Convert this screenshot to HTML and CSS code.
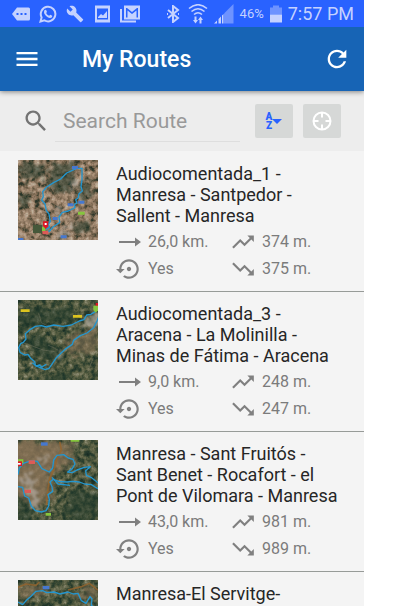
FILE: index.html
```html
<!DOCTYPE html>
<html lang="en">
<head>
<meta charset="utf-8">
<meta name="viewport" content="width=device-width, initial-scale=1">
<title>My Routes</title>
<link rel="stylesheet" href="styles.css">
</head>
<body>
<svg class="defs" aria-hidden="true">
  <defs>
    <!-- Terrain: noise mapped through a colour ramp -->
    <filter id="dry" x="0" y="0" width="1" height="1" color-interpolation-filters="sRGB">
      <feTurbulence type="fractalNoise" baseFrequency="0.06" numOctaves="5" seed="4"/>
      <feColorMatrix values="1.500 0 0 0 -.2  1.500 0 0 0 -.2  1.500 0 0 0 -.2  0 0 0 0 1"/>
      <feComponentTransfer>
        <feFuncR type="table" tableValues=".15 .18 .3 .44 .54 .6 .68 .7 .75"/>
        <feFuncG type="table" tableValues=".18 .22 .29 .38 .45 .51 .58 .62 .7"/>
        <feFuncB type="table" tableValues=".14 .17 .22 .29 .36 .42 .48 .55 .6"/>
      </feComponentTransfer>
    </filter>
    <filter id="green" x="0" y="0" width="1" height="1" color-interpolation-filters="sRGB">
      <feTurbulence type="fractalNoise" baseFrequency="0.06" numOctaves="5" seed="9"/>
      <feColorMatrix values="1.400 0 0 0 -.18  1.400 0 0 0 -.18  1.400 0 0 0 -.18  0 0 0 0 1"/>
      <feComponentTransfer>
        <feFuncR type="table" tableValues=".1 .12 .16 .22 .29 .36 .42 .5 .6"/>
        <feFuncG type="table" tableValues=".17 .2 .24 .28 .33 .38 .43 .5 .6"/>
        <feFuncB type="table" tableValues=".13 .16 .18 .2 .23 .27 .32 .4 .5"/>
      </feComponentTransfer>
    </filter>
    <filter id="rough" x="-0.2" y="-0.2" width="1.4" height="1.4" color-interpolation-filters="sRGB">
      <feTurbulence type="fractalNoise" baseFrequency="0.06" numOctaves="4" seed="2" result="n"/>
      <feDisplacementMap in="SourceGraphic" in2="n" scale="55" xChannelSelector="R" yChannelSelector="G"/>
      <feGaussianBlur stdDeviation="3"/>
    </filter>
  </defs>
  <symbol id="i-far" viewBox="0 0 26 26"><path d="M3 12h16V8.500l6 4.500-6 4.500V14H3z"/></symbol>
  <symbol id="i-loop" viewBox="0 0 24 24"><path d="M14 12c0-1.100-.9-2-2-2s-2 .9-2 2 .9 2 2 2 2-.9 2-2zm-2-9c-4.970 0-9 4.030-9 9H0l4 4 4-4H5c0-3.870 3.130-7 7-7s7 3.130 7 7-3.130 7-7 7c-1.510 0-2.910-.49-4.060-1.300l-1.420 1.440C8.040 20.300 9.940 21 12 21c4.970 0 9-4.030 9-9s-4.030-9-9-9z"/></symbol>
  <symbol id="i-up" viewBox="0 0 24 24"><path d="M16 6l2.290 2.290-4.880 4.880-4-4L2 16.590 3.410 18l6-6 4 4 6.300-6.290L22 12V6z"/></symbol>
  <symbol id="i-down" viewBox="0 0 24 24"><path d="M16 18l2.290-2.290-4.880-4.880-4 4L2 7.410 3.410 6l6 6 4-4 6.300 6.290L22 12v6z"/></symbol>
</svg>

<div class="status">
  <svg class="s-icon" viewBox="0 0 18 18"><path d="M5 2.500h11.500Q18 2.500 18 4v10q0 1.500-1.500 1.500H5L0 9z"/><path class="cut" d="M4.500 8h2v2h-2zM8.500 8h2v2h-2zM12.500 8h2v2h-2z"/></svg>
  <svg class="s-icon" viewBox="0 0 18 18"><path class="line" d="M1.500 16.500l1.100-4.100a7.300 7.300 0 1 1 2.900 3z"/><path d="M5.300 5.500c.5-1 1.700-1 2-.2l.6 1.500c.1.500-.6 1-.7 1.300.7 1.400 1.600 2.100 2.900 2.700.4-.1 1-1.200 1.400-1l1.700.9c.3 1.500-1 2.300-2.300 2.200C8 12.500 5 9.500 5 7z"/></svg>
  <svg class="s-icon" viewBox="0 0 24 24"><path d="M22.700 19l-9.100-9.100c.9-2.300.4-5-1.500-6.900-2-2-5-2.400-7.400-1.300L9 6 6 9 1.600 4.700C.4 7.100.9 10.100 2.900 12.100c1.900 1.900 4.600 2.400 6.900 1.500l9.100 9.100c.4.4 1 .4 1.400 0l2.300-2.300c.5-.4.5-1.100.1-1.400z"/></svg>
  <svg class="s-icon" viewBox="0 0 18 18"><path fill-rule="evenodd" d="M2 .5h15v17H2zM4 3.500v11h11v-11z"/><path d="M5 12l3-3 2 1.500L14 6v7H5z"/></svg>
  <svg class="s-icon wide" viewBox="0 0 20 18"><path class="line" d="M1 4v12.500h15"/><path fill-rule="evenodd" d="M4 .5h16v14H4zM6 3v9.500h1.500V5.500L12 9l4.500-3.500v7H18V3h-1l-5 4-5-4z"/></svg>
  <div class="status-end">
    <svg class="s-icon" viewBox="0 0 18 18"><path class="line" d="M4 5l10 8-5 4V1l5 4L4 13M3 9h1M14 9h1"/></svg>
    <svg class="s-icon wifi" viewBox="0 0 20 20"><path class="line thin" d="M1 4.500q9-7.500 18 0M3.500 7.500q6.500-5.500 13 0M6 10.500q4-3.500 8 0"/><path d="M6.500 12.500h2V16H10l-2.500 3.500L5 16h1.500zM11.500 19.500h2V16H15l-2.500-3.500L10 16h1.500z"/></svg>
    <svg class="s-icon wifi" viewBox="0 0 20 20"><path class="dim" d="M10 9.500L19.500 0v19.500H10z"/><path d="M0 19.500l3-3v3zM4.500 19.500V15l2.500-2.500v7zM8 19.500v-8l1.500-1.500v9.500z"/></svg>
    <span class="percent">46%</span>
    <svg class="battery" viewBox="0 0 12 18"><path class="dim" d="M3 .5h6v2h3v7H0v-7h3z"/><path d="M0 9.500h12v8H0z"/></svg>
    <span class="clock">7:57 PM</span>
  </div>
</div>

<header class="toolbar">
  <button class="bar-btn" aria-label="Menu"><svg viewBox="0 0 24 24"><path d="M3 18h18v-2H3zm0-5h18v-2H3zm0-7v2h18V6z"/></svg></button>
  <h1>My Routes</h1>
  <button class="bar-btn" aria-label="Refresh"><svg viewBox="0 0 24 24"><path d="M17.650 6.350C16.200 4.900 14.210 4 12 4c-4.420 0-7.990 3.580-7.990 8s3.570 8 7.990 8c3.730 0 6.840-2.550 7.730-6h-2.080c-.82 2.330-3.040 4-5.650 4-3.310 0-6-2.690-6-6s2.690-6 6-6c1.660 0 3.140.69 4.220 1.780L13 11h7V4z"/></svg></button>
</header>

<form class="search">
  <svg class="search-icon" viewBox="0 0 24 24"><path d="M15.500 14h-.79l-.28-.27C15.410 12.590 16 11.110 16 9.500 16 5.910 13.090 3 9.500 3S3 5.910 3 9.500 5.910 16 9.500 16c1.610 0 3.090-.59 4.230-1.570l.27.28v.79l5 4.990L20.490 19zm-6 0C7.010 14 5 11.990 5 9.500S7.010 5 9.500 5 14 7.010 14 9.500 11.990 14 9.500 14z"/></svg>
  <input type="text" placeholder="Search Route" aria-label="Search Route">
  <button type="button" class="tool-btn" aria-label="Sort"><span class="az">A<br>Z</span><span class="caret"></span></button>
  <button type="button" class="tool-btn" aria-label="Near me"><svg viewBox="0 0 20 20"><circle cx="10" cy="10" r="8.500"/><path d="M10 2v4.500M10 13.500V18M2 10h4.500M13.500 10H18"/></svg></button>
</form>

<main class="routes">
  <article class="route">
    <svg class="thumb" viewBox="0 0 240 240">
      <rect width="240" height="240" filter="url(#dry)"/>
      <g filter="url(#rough)">
        <path class="wood" d="M10 10h70l5 30-35 25-45-5zM105 12l60-5 15 30-20 50-45 15-25-30zM180 75l35-10 15 30-30 30-20-20z"/>
        <path class="wood" d="M160 195l40-10 20 25-40 15zM5 105l30-5 5 30-30 10z"/>
        <path class="pale" d="M165 60l20 8-5 12-20-5zM100 140l30 10 10 10-30-5zM155 185l10 8-40 55h-15z"/>
      </g>
      <path class="field" d="M45 195h28v24H45z"/>
      <path class="track" d="M83 208l12-6-4-10 6-8-4-22-8-10-4-20-10-12 5-10-2-15 12-14 22-14 20-10 18-18 30-14h16v34l-3 20 4 14-10 8-2 12-8 6 4 10-8 4 2 10-20 10-18 4-10 14 2 16-20 14-10 12-18 6"/>
      <path class="blue" d="M162 18h18v9h-18zM149 130h17v9h-17zM181 122h18v9h-18zM104 171h15v9h-15zM128 226h18v9h-18zM0 234h16v6H0z"/>
      <path class="lime" d="M180 155h20v9h-20zM72 201h10v13H72z"/>
      <path class="rose" d="M73 213h18v10H73z"/>
      <path class="red" d="M75 184h16v14l-8 9-8-9z"/><path class="white" d="M80 189h6v6h-6z"/>
    </svg>
    <div class="info">
      <h2>Audiocomentada_1 - Manresa - Santpedor - Sallent - Manresa</h2>
      <ul>
        <li><svg><use href="#i-far"/></svg>26,0 km.</li><li><svg><use href="#i-up"/></svg>374 m.</li>
        <li><svg><use href="#i-loop"/></svg>Yes</li><li><svg><use href="#i-down"/></svg>375 m.</li>
      </ul>
    </div>
  </article>

  <article class="route">
    <svg class="thumb" viewBox="0 0 240 240">
      <rect width="240" height="240" filter="url(#green)"/>
      <g filter="url(#rough)">
        <path class="wood" d="M0 25l160-5 10 45-90 5-80 30zM25 120l50-20 40 50-10 40-60-20zM80 225l60-5 40 40H80z"/>
        <path class="earth" d="M140 125l40-25 60-20v70l-80 20z"/>
        <path class="pale" d="M215 40l40 5-5 35-35-5-15 10zM110 160l25 2-5 8-20-2z"/>
      </g>
      <path class="road" d="M62 40l8 28 20 10 25 3M5 125l30 10 40 15 35 5M90 135l30 15M225 175l-15 40"/>
      <path class="track" d="M232 35l-14 8-12 2-8 14-14 4-24 12-25 4-28-4-22 6-15-4-18 2-16 10-14 12 2 16-8 10-8 4-6 12 4 14 14 8 10-2 8 12 12 10 2 12 15 6 14 6 12-4 10-14 12-18 12-12 18-16 18-12 4-12 20-14 20-8 20-16 10-20 7-18"/>
      <path class="track" d="M43 188l12 10 10-3 6 6 14-8"/>
      <path class="yellow" d="M8 28h27v8H8zM165 45h27v8h-27z"/>
      <path class="red" d="M233 9h7v12h-7z"/><path class="lime" d="M226 17h14v14l-7 7-7-8z"/>
    </svg>
    <div class="info">
      <h2>Audiocomentada_3 - Aracena - La Molinilla - Minas de Fátima - Aracena</h2>
      <ul>
        <li><svg><use href="#i-far"/></svg>9,0 km.</li><li><svg><use href="#i-up"/></svg>248 m.</li>
        <li><svg><use href="#i-loop"/></svg>Yes</li><li><svg><use href="#i-down"/></svg>247 m.</li>
      </ul>
    </div>
  </article>

  <article class="route">
    <svg class="thumb" viewBox="0 0 240 240">
      <rect width="240" height="240" filter="url(#green)"/>
      <g filter="url(#rough)">
        <path class="earth" d="M-20 0l190 5 5 60-60 30-15 90-50 20-70-50z"/>
        <path class="earth" d="M-20 0l160 5 5 60-50 30-15 80-30 20-70-50z"/>
        <path class="pale" d="M10 105l25-10 15 50 15 50-20 10zM75 40l15 5-5 25-15-5z"/>
        <path class="wood" d="M0 175l35 10 15 60-60 10zM165 150l80 5v70l-70 20-40-20z"/>
      </g>
      <path class="trail" d="M85 195l5-50 5-30 15-30 5-25 15-30-5-25"/>
      <path class="track" d="M0 104l4-20 12-14 24-8 18 2 14 22 22 10 10-12 3-24 10-14 20-2 14 10 14 4 6 14-8 14-14 10 14 2 14-8 22-8 18-2-14 12 2 14 14 6 18 14 14 12 6 6M0 140l14 2 6 26 12 6 8 24 12 14 18 4 14-4 8-14 2-20-4-14 14-10-2-14-6-14 10-8 16 6 24 2 18-2 20 2 16 6 20 2 20 12"/>
      <path class="track" d="M102 112l18 20 36 4"/>
      <path class="blue" d="M69 7h20v10H69z"/>
      <path class="rose" d="M32 61h19v11H32zM20 149h19v10H20z"/>
      <path class="lime" d="M158 0h26v5h-26zM83 219h16v8H83zM0 58h16v12H0z"/>
      <path class="red" d="M0 64h12v14H0z"/><path class="white" d="M0 69h8v5H0z"/>
    </svg>
    <div class="info">
      <h2>Manresa - Sant Fruitós - Sant Benet - Rocafort - el Pont de Vilomara - Manresa</h2>
      <ul>
        <li><svg><use href="#i-far"/></svg>43,0 km.</li><li><svg><use href="#i-up"/></svg>981 m.</li>
        <li><svg><use href="#i-loop"/></svg>Yes</li><li><svg><use href="#i-down"/></svg>989 m.</li>
      </ul>
    </div>
  </article>

  <article class="route">
    <svg class="thumb" viewBox="0 0 240 240">
      <rect width="240" height="240" filter="url(#green)"/>
      <g filter="url(#rough)"><path class="earth" d="M0 15l80 5 10 20-90 25zM150 50l70-30 30 20-50 30z"/></g>
      <path class="trail" d="M0 22l24-10 30 4 10-10M150 30l40-10 24-10 26 20"/>
      <path class="track" d="M0 66l14 8 12-14 14-12 14-14 20-2 12 6 22-2 18 6 24-6 16 6 14-2 10 22 14 8 12-20 6 6-2 20 12 8 18-12"/>
      <path class="blue" d="M74 18h20v10H74z"/>
    </svg>
    <div class="info">
      <h2>Manresa-El Servitge-</h2>
    </div>
  </article>
</main>
</body>
</html>
```
FILE: styles.css
```css
* { box-sizing: border-box; }

body {
  margin: 0 41px 0 0;
  height: 100vh;
  overflow: hidden;
  display: flex;
  flex-direction: column;
  background: #fff;
  font-family: Roboto, "Liberation Sans", sans-serif;
}

.defs { position: absolute; width: 0; height: 0; }

button { border: 0; padding: 0; background: none; font: inherit; }

/* Status bar */
.status {
  flex: none;
  height: 27px;
  padding: 0 10px 0 12px;
  display: flex;
  align-items: center;
  gap: 9px;
  background: #2962ff;
  color: #c5d2ff;
}
.status svg { fill: #c5d2ff; flex: none; }
.status .line { fill: none; stroke: #c5d2ff; stroke-width: 2; }
.status .thin { stroke-width: 1.6; }
.status .cut { fill: #2962ff; }
.status .dim { fill: #6e93ff; }
.s-icon { width: 18px; height: 18px; }
.s-icon.wide { width: 20px; }
.s-icon.wifi { width: 20px; height: 20px; }
.status-end { margin-left: auto; display: flex; align-items: center; gap: 6px; }
.percent { font-size: 13px; }
.battery { width: 12px; height: 18px; }
.clock { font-size: 18px; }

/* Toolbar */
.toolbar {
  flex: none;
  height: 64px;
  padding: 0 13px;
  display: flex;
  align-items: center;
  background: #1764b5;
  color: #fff;
  box-shadow: 0 1px 5px rgba(0, 0, 0, .45);
  z-index: 1;
  clip-path: inset(0 0 -8px 0);
}
.toolbar h1 { flex: 1; margin: 0 0 0 41px; font-size: 23px; font-weight: 500; }
.bar-btn { width: 28px; height: 28px; }
.bar-btn svg { display: block; fill: #fff; }

/* Search */
.search {
  flex: none;
  height: 60px;
  padding: 0 23px 0 22px;
  display: flex;
  align-items: center;
  background: #ededed;
}
.search-icon { width: 28px; height: 28px; flex: none; fill: #737373; }
.search input {
  flex: 1;
  min-width: 0;
  height: 42px;
  margin: 0 5px 0 5px;
  padding: 0 8px;
  border: 0;
  border-bottom: 1px solid #dedede;
  outline: 0;
  background: none;
  font: 21px Roboto, "Liberation Sans", sans-serif;
  color: #333;
}
.search input::placeholder { color: #999; opacity: 1; }
.tool-btn {
  width: 38px;
  height: 34px;
  margin-left: 10px;
  flex: none;
  display: flex;
  align-items: center;
  justify-content: center;
  border-radius: 2px;
  background: #d6d8d7;
}
.tool-btn svg { width: 20px; height: 20px; fill: none; stroke: #fff; stroke-width: 2; }
.az { color: #2962ff; font-size: 10px; line-height: 9px; font-weight: 900; text-align: center; }
.caret { border: 5px solid transparent; border-top-color: #2962ff; border-bottom: 0; }

/* Route list */
.routes { flex: 1; min-height: 0; padding-top: 1px; overflow: hidden; background: #f4f4f4; }
.route {
  min-height: 140px;
  padding: 8px 18px;
  display: flex;
  gap: 18px;
  border-bottom: 1px solid #979b98;
}
.thumb { width: 80px; height: 80px; flex: none; }
.info { flex: 1; padding-top: 3px; }
.info h2 { margin: 0 0 2px; font-size: 18px; line-height: 21px; font-weight: 400; color: #262626; }
.info ul { margin: 0; padding: 0; list-style: none; display: grid; grid-template-columns: 114px 1fr; grid-auto-rows: 27px; }
.info li { display: flex; align-items: center; gap: 6px; font-size: 16px; color: #7b7b7b; white-space: nowrap; }
.info li svg { width: 26px; height: 26px; fill: #808080; flex: none; }

/* Map thumbnails */
.wood { fill: #233b2c; opacity: .55; }
.earth { fill: #8a7358; opacity: .55; }
.pale { fill: #b5aea4; opacity: .65; }
.field { fill: #46583a; }
.track { fill: none; stroke: #2496cf; stroke-width: 4; stroke-linejoin: round; }
.road { fill: none; stroke: #85806c; stroke-width: 2; opacity: .6; }
.trail { fill: none; stroke: #96642d; stroke-width: 5; opacity: .8; }
.blue { fill: #4678cf; }
.lime { fill: #86c63e; }
.rose { fill: #dd5b56; }
.red { fill: #dc1725; }
.yellow { fill: #ddc31f; }
.white { fill: #fff; }
```
